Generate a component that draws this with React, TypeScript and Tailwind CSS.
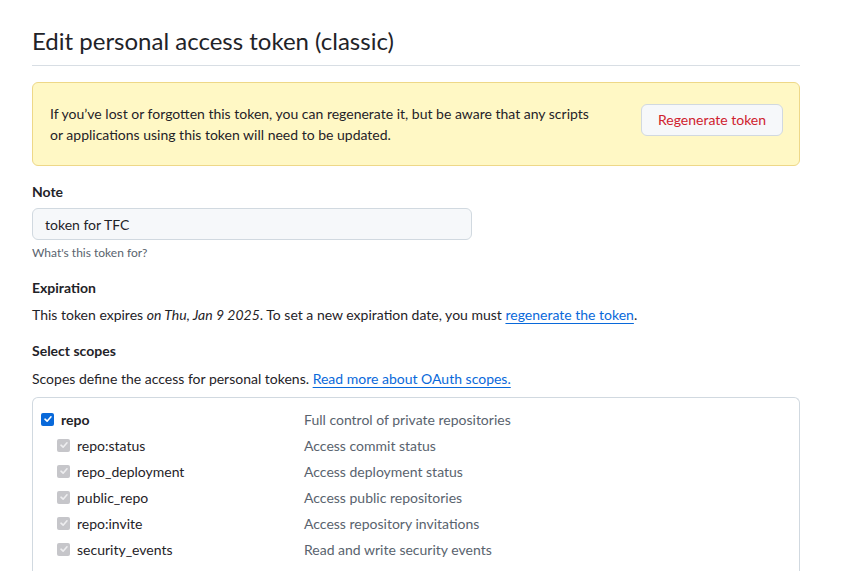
import React from 'react';

const scopes = [
  { name: 'repo:status', desc: 'Access commit status' },
  { name: 'repo_deployment', desc: 'Access deployment status' },
  { name: 'public_repo', desc: 'Access public repositories' },
  { name: 'repo:invite', desc: 'Access repository invitations' },
  { name: 'security_events', desc: 'Read and write security events' },
];

function Check({ disabled }: { disabled?: boolean }) {
  return (
    <span
      className={`inline-flex items-center justify-center w-[13px] h-[13px] rounded-[2px] shrink-0 ${
        disabled ? 'bg-[#c6c6ca]' : 'bg-[#0969da]'
      }`}
    >
      <svg width="10" height="10" viewBox="0 0 10 10" fill="none">
        <path
          d="M2 5.2 L4.1 7.2 L8 2.8"
          stroke={disabled ? '#eeeef0' : '#ffffff'}
          strokeWidth="1.6"
          strokeLinecap="round"
          strokeLinejoin="round"
        />
      </svg>
    </span>
  );
}

export default function App() {
  return (
    <div className="min-h-screen bg-white text-[#1f2328] text-[14px] font-['Segoe_UI','Lato',sans-serif]">
      <div className="w-[768px] ml-[32px] pt-[24px]">
        {/* Header */}
        <div className="border-b border-[#d8dee4] pb-[7px]">
          <h1 className="text-[24px] leading-[34px] font-normal">Edit personal access token (classic)</h1>
        </div>

        {/* Flash warning */}
        <div className="mt-[16px] h-[84px] flex items-center justify-between pl-[17px] pr-[16px] bg-[#fff8c5] border border-[#eed888] rounded-[6px]">
          <p className="leading-[21px] w-[548px]">
            If you’ve lost or forgotten this token, you can regenerate it, but be aware that any scripts
            or applications using this token will need to be updated.
          </p>
          <button className="h-[32px] w-[142px] bg-[#f6f8fa] border border-[#d1d9e0] rounded-[6px] text-[#cf222e] mt-[-9px]">
            Regenerate token
          </button>
        </div>

        {/* Note */}
        <div className="mt-[16px]">
          <div className="font-bold leading-[20px]">Note</div>
          <div className="mt-[6px] w-[440px] h-[32px] flex items-center px-[12px] bg-[#f6f8fa] border border-[#d1d9e0] rounded-[6px]">
            token for TFC
          </div>
          <div className="mt-[4px] text-[12px] leading-[18px] text-[#59636e]">What's this token for?</div>
        </div>

        {/* Expiration */}
        <div className="mt-[16px]">
          <div className="font-bold leading-[20px]">Expiration</div>
          <p className="mt-[6px] leading-[21px]">
            This token expires <em>on Thu, Jan 9 2025</em>. To set a new expiration date, you must{' '}
            <a className="text-[#0969da] underline underline-offset-[3px]">regenerate the token</a>.
          </p>
        </div>

        {/* Scopes */}
        <div className="mt-[16px]">
          <div className="font-bold leading-[20px]">Select scopes</div>
          <p className="mt-[7px] leading-[21px]">
            Scopes define the access for personal tokens.{' '}
            <a className="text-[#0969da] underline underline-offset-[3px]">Read more about OAuth scopes.</a>
          </p>
          <div className="mt-[8px] border border-[#d1d9e0] rounded-t-[6px] border-b-0 pt-[8px] pb-[10px]">
            <div className="flex items-center h-[26px] pl-[8px]">
              <div className="w-[263px] flex items-center gap-[7px]">
                <Check />
                <span className="font-bold">repo</span>
              </div>
              <span className="text-[#59636e]">Full control of private repositories</span>
            </div>
            {scopes.map((s) => (
              <div key={s.name} className="flex items-center h-[26px] pl-[24px]">
                <div className="w-[247px] flex items-center gap-[7px]">
                  <Check disabled />
                  <span>{s.name}</span>
                </div>
                <span className="text-[#59636e]">{s.desc}</span>
              </div>
            ))}
          </div>
        </div>
      </div>
    </div>
  );
}
